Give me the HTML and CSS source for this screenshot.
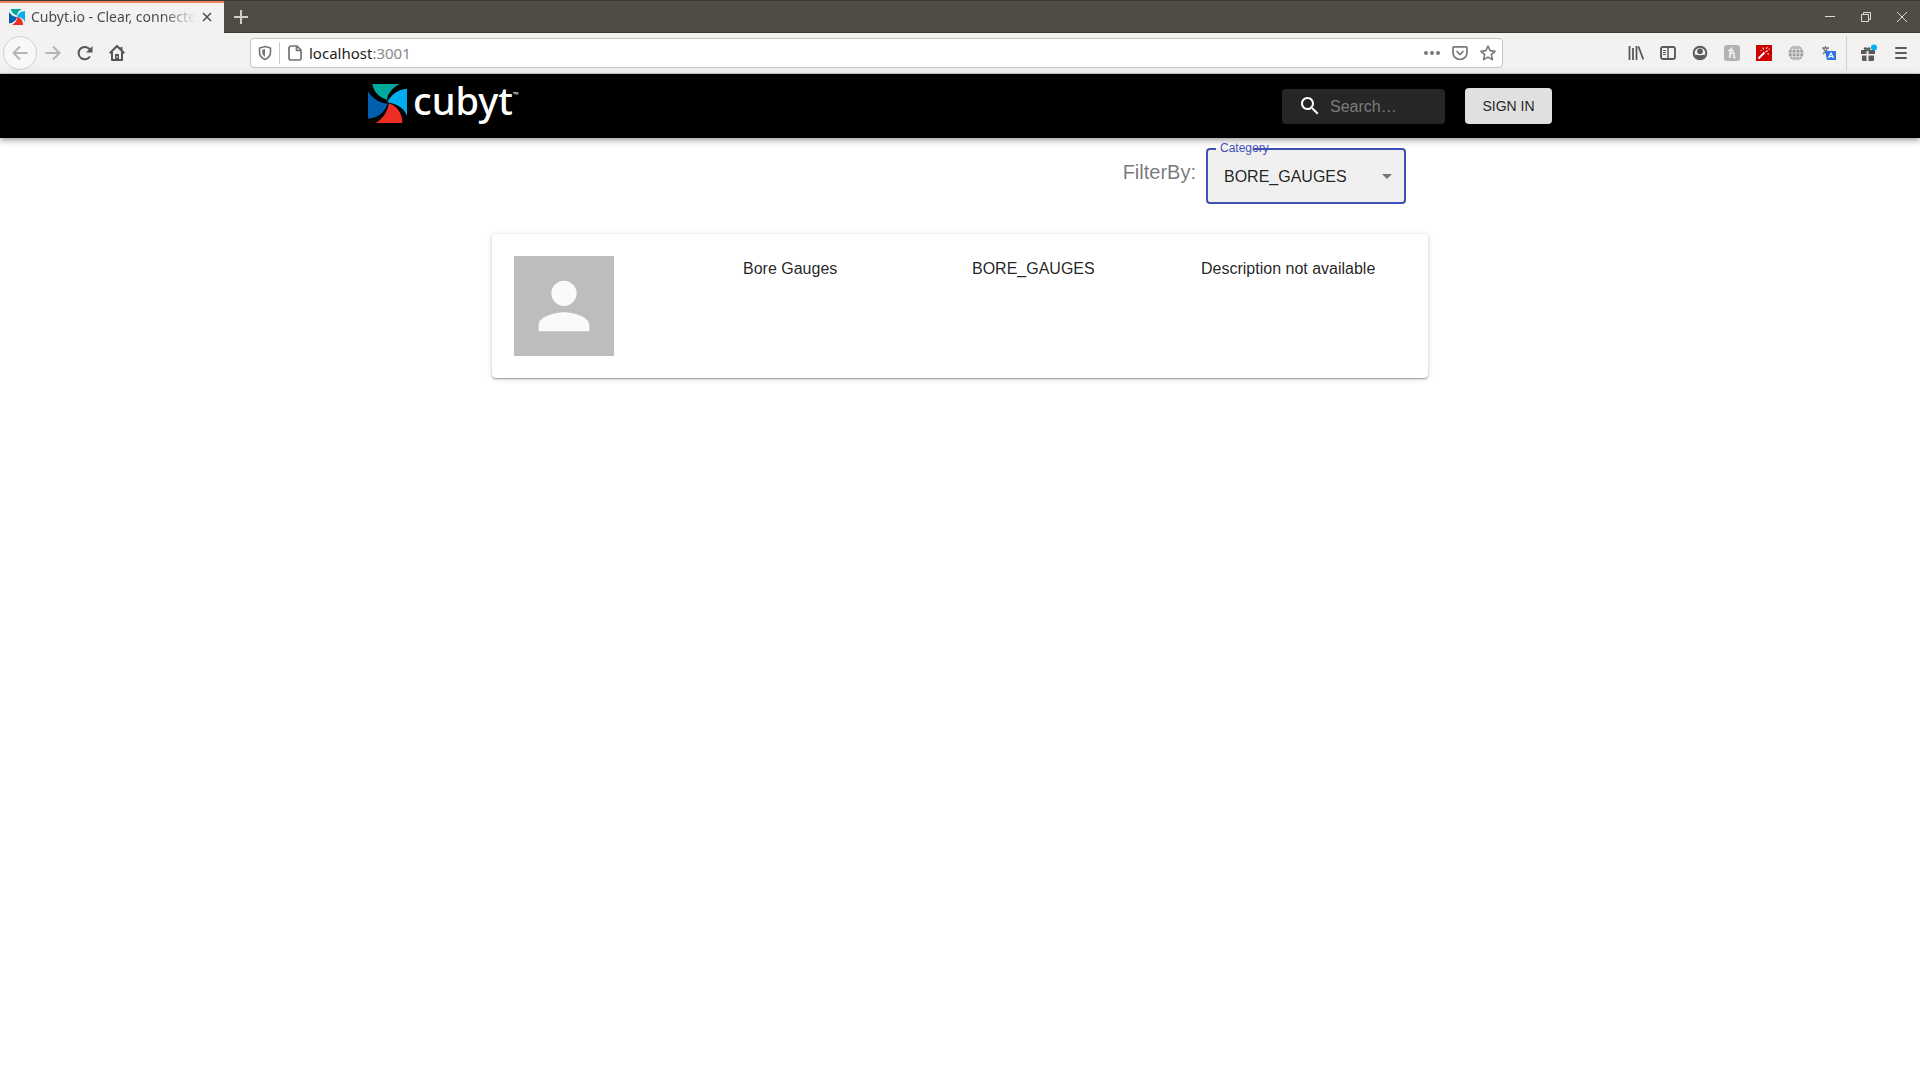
FILE: index.html
```html
<!DOCTYPE html>
<html lang="en">
<head>
<meta charset="utf-8">
<title>Cubyt.io - Clear, connected</title>
<link rel="stylesheet" href="styles.css">
</head>
<body>
<svg class="defs" aria-hidden="true">
  <symbol id="pinwheel" viewBox="0 0 118 118">
    <path fill="#00a99d" d="M13 0H95C74 12 60 27 57 50L54 46C38 41 18 28 13 0Z"/>
    <path fill="#00aeef" d="M58 55C72 30 90 16 118 14V96C111 76 92 60 58 55Z"/>
    <path fill="#ee2e24" d="M63 58C88 66 104 88 104 118H23C46 104 59 84 63 58Z"/>
    <path fill="#0060af" d="M0 22C12 42 30 56 60 60C50 86 27 105 0 105Z"/>
  </symbol>
</svg>

<div class="browser">
  <div class="tabbar">
    <div class="tab">
      <svg class="favicon"><use href="#pinwheel"/></svg>
      <span class="tab-title">Cubyt.io - Clear, connecte</span>
      <button class="tab-close" aria-label="Close tab"><svg width="10" height="10" viewBox="0 0 10 10"><path d="M1 1l8 8M9 1l-8 8" stroke="#4c4c4c" stroke-width="1.5"/></svg></button>
    </div>
    <button class="new-tab" aria-label="New tab"><svg width="14" height="14" viewBox="0 0 14 14"><path d="M7 0v14M0 7h14" stroke="#d0cec8" stroke-width="2"/></svg></button>
    <div class="window-controls">
      <button aria-label="Minimize"><svg width="12" height="12" viewBox="0 0 12 12"><path d="M1 5.5h10" stroke="#dfdbd2"/></svg></button>
      <button aria-label="Restore"><svg width="12" height="12" viewBox="0 0 12 12" fill="none" stroke="#dfdbd2"><path d="M1.500 3.500h7v7h-7zM3.500 3.500v-2h7v7h-2"/></svg></button>
      <button aria-label="Close"><svg width="12" height="12" viewBox="0 0 12 12"><path d="M1 1l10 10M11 1L1 11" stroke="#dfdbd2"/></svg></button>
    </div>
  </div>

  <div class="toolbar">
    <div class="nav-buttons">
      <button class="tool back" aria-label="Back"><svg width="16" height="16" viewBox="0 0 16 16" fill="none" stroke="#b5b4b2" stroke-width="2"><path d="M15.500 8H1.500M8 1.500L1.500 8 8 14.500"/></svg></button>
      <button class="tool" aria-label="Forward"><svg width="16" height="16" viewBox="0 0 16 16" fill="none" stroke="#b5b4b2" stroke-width="2"><path d="M.5 8h14M8 1.500L14.500 8 8 14.500"/></svg></button>
      <button class="tool" aria-label="Reload"><svg width="16" height="16" viewBox="0 0 16 16" fill="none" stroke="#555" stroke-width="2"><path d="M13 11.500A6.200 6.200 0 1 1 12.500 4"/><path fill="#555" stroke="none" d="M15.500 1v6.500H9z"/></svg></button>
      <button class="tool" aria-label="Home"><svg width="16" height="16" viewBox="0 0 16 16" fill="none" stroke="#555" stroke-width="2" stroke-linejoin="round"><path d="M.7 8.300L8 1l7.300 7.300M3 7v8h10V7"/><path fill="#555" stroke="none" d="M6 9h4v6H6z"/><path d="M12.500 5V2" /><path stroke="#f3f2f0" stroke-width="1" d="M8 11v2"/></svg></button>
    </div>

    <div class="urlbar">
      <button class="shield" aria-label="Tracking protection"><svg width="14" height="16" viewBox="0 0 14 16" fill="none" stroke="#737373" stroke-width="1.600"><path d="M7 1.500l5.500 1.500v4c0 3.500-2 6-5.500 7.500C3.500 13 1.500 10.500 1.500 7V3z"/><path fill="#737373" stroke="none" d="M7 4v8C5 10.500 4.200 9 4.200 7V4.700z"/></svg></button>
      <button class="page-info" aria-label="Page information"><svg width="14" height="16" viewBox="0 0 14 16" fill="none" stroke="#737373" stroke-width="1.700" stroke-linejoin="round"><path d="M3 1h6l4 4v8.500a1.500 1.500 0 0 1-1.500 1.500H3a2 2 0 0 1-2-2V3a2 2 0 0 1 2-2zM8.500 1.500v4H13"/></svg></button>
      <div class="address" role="textbox" aria-label="Address"><span>localhost</span><span class="port">:3001</span></div>
      <div class="url-actions">
        <button aria-label="Page actions"><svg width="16" height="16" viewBox="0 0 16 16" fill="#777"><circle cx="2" cy="8" r="2"/><circle cx="8" cy="8" r="2"/><circle cx="14" cy="8" r="2"/></svg></button>
        <button aria-label="Save to Pocket"><svg width="16" height="16" viewBox="0 0 16 16" fill="none" stroke="#777" stroke-width="1.700" stroke-linecap="round" stroke-linejoin="round"><path d="M2 1.800h12a1 1 0 0 1 1 1v4.700a7 7 0 0 1-14 0V2.800a1 1 0 0 1 1-1zM5 6.500l3 3 3-3"/></svg></button>
        <button aria-label="Bookmark"><svg width="16" height="16" viewBox="0 0 16 16" fill="none" stroke="#777" stroke-width="1.600" stroke-linejoin="round"><path d="M8 1l2.100 4.600 5 .6-3.700 3.400 1 5L8 12.100l-4.400 2.500 1-5L.9 6.200l5-.6z"/></svg></button>
      </div>
    </div>

    <div class="extensions">
      <button class="tool" aria-label="Library"><svg width="16" height="16" viewBox="0 0 16 16" stroke="#5a5a5a" stroke-width="1.800" fill="none"><path d="M1.500 1v14M5 3v12M8.500 1v14M10.500 1.500l4.800 13"/></svg></button>
      <button class="tool" aria-label="Sidebars"><svg width="16" height="16" viewBox="0 0 16 16" fill="none" stroke="#5a5a5a"><rect x="1" y="2" width="14" height="12" rx="2" stroke-width="1.900"/><path stroke-width="1.500" d="M8 2v12"/><path d="M3 5.500h3M3 7.500h3M3 9.500h3"/></svg></button>
      <button class="tool" aria-label="Account"><svg width="16" height="16" viewBox="0 0 16 16"><circle cx="8" cy="8" r="6.300" fill="none" stroke="#5a5a5a" stroke-width="2"/><circle cx="8" cy="6.300" r="2.800" fill="#5a5a5a"/><path fill="#5a5a5a" d="M3 9.500c3 1 7 1 10 0-.5 2.500-2.500 4-5 4s-4.500-1.500-5-4z"/></svg></button>
      <button class="tool" aria-label="Honey"><svg width="16" height="16" viewBox="0 0 16 16"><rect width="16" height="16" rx="3" fill="#b1b2b3"/><path fill="none" stroke="#f3f3f3" stroke-width="1.700" d="M7.500 2.500C6 6 6.500 9 5.500 13M4 5.500h6M6.500 9C8 7 10.500 7 10 9.500c-.5 2-.5 3.500 1.500 3"/></svg></button>
      <button class="tool" aria-label="Magic wand"><svg width="16" height="16" viewBox="0 0 16 16"><path fill="#c00" d="M0 0h16v16H0z"/><path stroke="#fff" stroke-width="2" d="M2.500 13.500l6-6"/><path stroke="#f5c9c9" stroke-width="1.200" d="M9 7l3-1.500M7.500 4.500L7 2.500M10 4l1.500-2M12.500 4H14M11.500 8.500l1.500 1M4.500 5.500h1"/></svg></button>
      <button class="tool" aria-label="Globe"><svg width="16" height="16" viewBox="0 0 16 16"><circle cx="8" cy="8" r="7.500" fill="#a0a0a0"/><g fill="none" stroke="#eee" stroke-width=".8"><path d="M0 8h16M1.500 4.300h13M1.500 11.700h13M8 0v16"/><ellipse cx="8" cy="8" rx="4" ry="7.500"/></g></svg></button>
      <button class="tool" aria-label="Translate"><svg width="16" height="16" viewBox="0 0 16 16"><path stroke="#777" stroke-width="1.300" fill="none" d="M2 3h7M5.500 1v2M3.500 4l4 5M7.500 4L3 9"/><path fill="#2f73e8" d="M5 6h11v9H7z"/><path stroke="#fff" stroke-width="1.200" fill="none" d="M8.500 13L11 8l2.500 5M9.300 11.500h3.400"/></svg></button>
      <button class="tool gift" aria-label="What's new"><svg width="18" height="18" viewBox="0 0 18 18" fill="#5a5a5a"><path d="M2 6h5.500v4H2zM9.500 6H16v4H9.500zM3 11.500h4.500V17H4a1 1 0 0 1-1-1zM9.500 11.500H15V16a1 1 0 0 1-1 1H9.500z"/><path d="M8.500 6.500C4 6 5 2 8.500 5 11 2 12 6 8.500 6.500" fill="none" stroke="#5a5a5a" stroke-width="1.500"/><circle cx="15" cy="3.500" r="3" fill="#00b0f4"/></svg></button>
      <button class="tool" aria-label="Menu"><svg width="16" height="16" viewBox="0 0 16 16" stroke="#5a5a5a" stroke-width="2"><path d="M3 3h10M3 8h10M3 13h10" stroke-linecap="round"/></svg></button>
    </div>
  </div>
</div>

<header class="app-bar">
  <div class="app-bar-inner">
    <a class="brand" href="#"><svg class="brand-mark" aria-hidden="true"><use href="#pinwheel"/></svg><span class="brand-name">cubyt</span><span class="brand-tm">™</span></a>
    <div class="header-actions">
      <label class="search">
        <svg width="24" height="24" viewBox="0 0 24 24" fill="#fff" aria-hidden="true"><path d="M15.500 14h-.79l-.28-.27C15.410 12.590 16 11.110 16 9.500 16 5.910 13.090 3 9.500 3S3 5.910 3 9.500 5.910 16 9.500 16c1.610 0 3.090-.59 4.230-1.570l.27.28v.79l5 4.990L20.490 19l-4.990-5zm-6 0C7.010 14 5 11.990 5 9.500S7.010 5 9.500 5 14 7.010 14 9.500 11.990 14 9.500 14z"/></svg>
        <input type="text" placeholder="Search…" aria-label="Search">
      </label>
      <button class="sign-in">SIGN IN</button>
    </div>
  </div>
</header>

<main class="content">
  <div class="filter">
    <span class="filter-label">FilterBy:</span>
    <div class="select-field">
      <select id="category"><option>BORE_GAUGES</option></select>
      <fieldset class="outline" aria-hidden="true"><legend></legend></fieldset>
      <label for="category">Category</label>
      <svg class="arrow" width="24" height="24" viewBox="0 0 24 24" aria-hidden="true"><path fill="#757575" d="M7 10l5 5 5-5z"/></svg>
    </div>
  </div>
  <article class="card">
    <div class="avatar"><svg viewBox="0 0 24 24" aria-hidden="true"><path fill="#fafafa" d="M12 12c2.210 0 4-1.790 4-4s-1.790-4-4-4-4 1.790-4 4 1.790 4 4 4zm0 2c-2.670 0-8 1.340-8 4v2h16v-2c0-2.660-5.330-4-8-4z"/></svg></div>
    <div>Bore Gauges</div>
    <div>BORE_GAUGES</div>
    <div>Description not available</div>
  </article>
</main>
</body>
</html>
```

FILE: styles.css
```css
* {
  box-sizing: border-box;
}

body {
  margin: 0;
  background: #fff;
  color: rgba(0, 0, 0, 0.87);
  font: 16px/26px "Liberation Sans", Arial, sans-serif;
}

button {
  display: flex;
  align-items: center;
  justify-content: center;
  padding: 0;
  border: 0;
  background: none;
}

svg {
  flex-shrink: 0;
}

.defs {
  display: none;
}

/* Browser chrome */
.browser {
  font: 14px/20px "Noto Sans", sans-serif;
  color: #4c4c4c;
}

.tabbar {
  display: flex;
  height: 33px;
  background: #504c44;
  border-top: 1px solid #3a3833;
  box-shadow: inset 0 -1px #3a3833;
}

.tab {
  display: flex;
  align-items: center;
  width: 224px;
  padding: 0 11px 2px 9px;
  border-top: 2px solid #f0805a;
  background: #f3f2f0;
}

.favicon {
  width: 16px;
  height: 16px;
  margin-right: 6px;
}

.tab-title {
  flex: 1;
  white-space: nowrap;
  -webkit-mask-image: linear-gradient(to right, #000 80%, transparent);
  mask-image: linear-gradient(to right, #000 80%, transparent);
}

.tab-close {
  width: 12px;
  height: 20px;
  margin-left: 5px;
}

.new-tab {
  width: 34px;
}

.window-controls {
  display: flex;
  margin-left: auto;
}

.window-controls button {
  width: 36px;
}

.toolbar {
  display: flex;
  align-items: center;
  height: 41px;
  padding: 0 3px;
  background: #f3f2f0;
  border-bottom: 1px solid #ccc;
}

.nav-buttons,
.extensions {
  display: flex;
  align-items: center;
}

.tool {
  width: 32px;
  height: 32px;
}

.back {
  width: 34px;
  height: 34px;
  border: 1px solid #d0cfcd;
  border-radius: 50%;
  background: #f8f8f7;
}

.urlbar {
  display: flex;
  flex: 1;
  align-items: center;
  height: 30px;
  margin: 0 117px;
  border: 1px solid #c5c4c2;
  border-radius: 4px;
  background: #fff;
}

.shield {
  width: 29px;
  height: 22px;
  border-right: 1px solid #ccc;
}

.page-info {
  width: 29px;
}

.address {
  flex: 1;
  color: #222;
  font-size: 15px;
}

.port {
  color: #888;
}

.url-actions {
  display: flex;
}

.url-actions button {
  width: 28px;
}

.gift {
  width: 39px;
  height: 34px;
  margin-left: 2px;
  padding-left: 4px;
  border-left: 1px solid #d0cfcd;
}

/* App bar */
.app-bar {
  position: relative;
  background: #000;
  box-shadow: 0 2px 4px -1px rgba(0, 0, 0, 0.2), 0 4px 5px rgba(0, 0, 0, 0.14), 0 1px 10px rgba(0, 0, 0, 0.12);
}

.app-bar-inner {
  display: flex;
  align-items: center;
  justify-content: space-between;
  max-width: 1232px;
  min-height: 64px;
  margin: 0 auto;
  padding: 0 24px;
}

.brand {
  display: flex;
  height: 44px;
  color: #fff;
  font-family: "Noto Sans", sans-serif;
  text-decoration: none;
}

.brand-mark {
  width: 39px;
  height: 39px;
  margin-right: 6px;
}

.brand-name {
  font-size: 38px;
  font-weight: 500;
  line-height: 32px;
}

.brand-tm {
  font-size: 7px;
  line-height: 22px;
}

.header-actions {
  display: flex;
  align-items: center;
  gap: 20px;
}

.search {
  display: flex;
  align-items: center;
  width: 163px;
  height: 35px;
  padding: 0 16px;
  border-radius: 4px;
  background: #262626;
}

.search input {
  width: 100%;
  min-width: 0;
  margin-left: 8px;
  padding: 2px 0 0;
  border: 0;
  outline: 0;
  background: none;
  color: #fff;
  font: inherit;
}

.search input::placeholder {
  color: #7c7c7c;
}

.sign-in {
  min-width: 87px;
  height: 36px;
  padding: 0 16px;
  border-radius: 4px;
  background: #e0e0e0;
  color: rgba(0, 0, 0, 0.87);
  font: 14px/24px "Liberation Sans", Arial, sans-serif;
}

/* Product list */
.content {
  max-width: 936px;
  margin: 0 auto;
  padding: 10px 0 24px;
}

.filter {
  display: flex;
  justify-content: flex-end;
  gap: 10px;
  padding: 0 22px 30px;
}

.filter-label {
  color: rgba(0, 0, 0, 0.54);
  font-size: 20px;
  line-height: 48px;
}

.select-field {
  position: relative;
  width: 200px;
  height: 56px;
}

.select-field select {
  width: 100%;
  height: 100%;
  padding: 2px 32px 0 18px;
  border: 0;
  border-radius: 4px;
  outline: 0;
  appearance: none;
  background: #f0f0f0;
  color: rgba(0, 0, 0, 0.87);
  font: inherit;
}

.outline {
  position: absolute;
  inset: -1px 0 0;
  min-width: 0;
  margin: 0;
  padding: 0 8px;
  border: 2px solid #3f51b5;
  border-radius: 4px;
  pointer-events: none;
}

.outline legend {
  width: 37px;
  height: 4px;
  padding: 0;
}

.select-field label {
  position: absolute;
  top: -8px;
  left: 14px;
  color: #3f51b5;
  font-size: 12px;
  line-height: 16px;
}

.arrow {
  position: absolute;
  top: 16px;
  right: 7px;
  pointer-events: none;
}

.card {
  display: grid;
  grid-template-columns: repeat(4, 1fr);
  gap: 24px;
  padding: 22px;
  border-radius: 4px;
  background: #fff;
  box-shadow: 0 1px 1px rgba(0, 0, 0, 0.3), 0 1px 5px rgba(0, 0, 0, 0.2);
}

.avatar {
  display: flex;
  align-items: center;
  justify-content: center;
  width: 100px;
  height: 100px;
  background: #bdbdbd;
}

.avatar svg {
  width: 76px;
}
```
